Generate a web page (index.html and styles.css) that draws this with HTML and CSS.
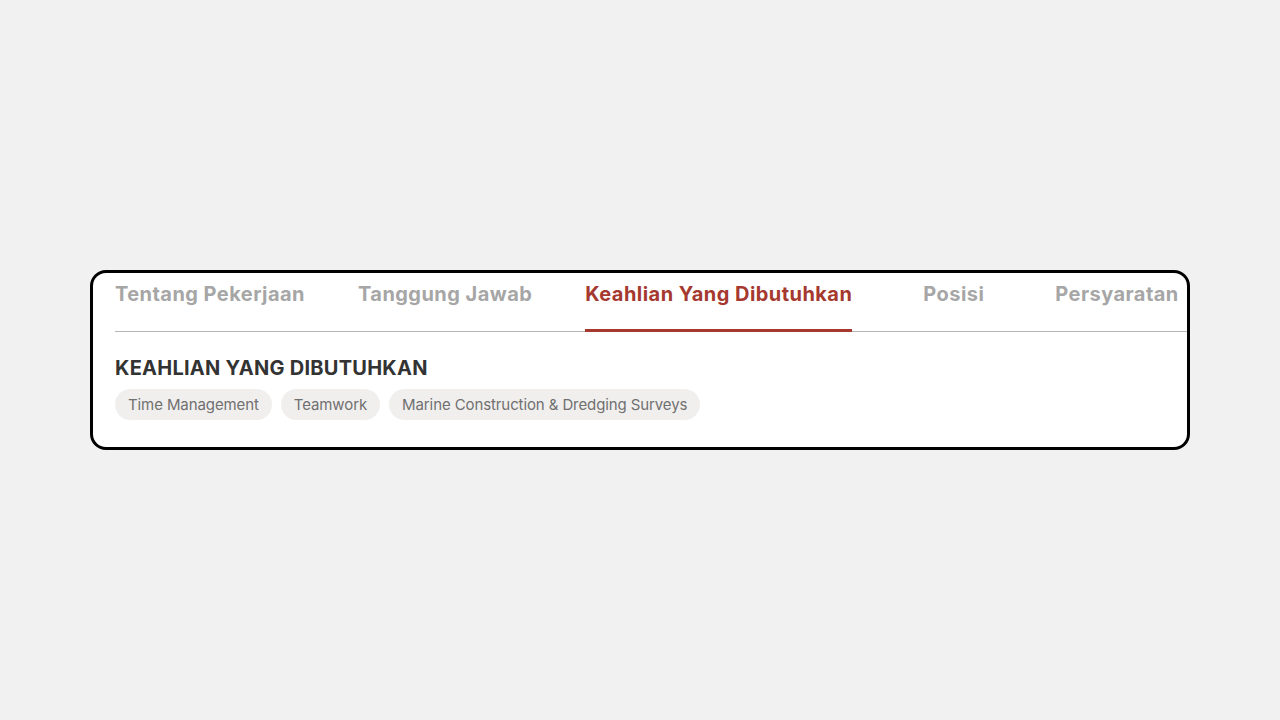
FILE: index.html
```html
<!DOCTYPE html>
<html lang="id">
<head>
<meta charset="utf-8">
<title>Keahlian Yang Dibutuhkan</title>
<link rel="stylesheet" href="styles.css">
</head>
<body>
<main class="page">
  <section class="card">
    <nav class="tabs">
      <a class="tab">Tentang Pekerjaan</a>
      <a class="tab">Tanggung Jawab</a>
      <a class="tab active">Keahlian Yang Dibutuhkan</a>
      <a class="tab">Posisi</a>
      <a class="tab">Persyaratan</a>
    </nav>
    <div class="content">
      <h2 class="title">KEAHLIAN YANG DIBUTUHKAN</h2>
      <ul class="chips">
        <li class="chip">Time Management</li>
        <li class="chip">Teamwork</li>
        <li class="chip">Marine Construction &amp; Dredging Surveys</li>
      </ul>
    </div>
  </section>
</main>
</body>
</html>
```
FILE: styles.css
```css
* { box-sizing: border-box; }
html, body { margin: 0; padding: 0; }
body {
  background: #f1f1f1;
  font-family: Inter, "Noto Sans", "Liberation Sans", sans-serif;
  width: 1280px;
  height: 720px;
}
.page {
  display: flex;
  justify-content: center;
  padding-top: 270px;
}
.card {
  width: 1100px;
  height: 180px;
  background: #fff;
  border: 3px solid #000;
  border-radius: 16px;
  padding-left: 22px;
  overflow: hidden;
}
.tabs {
  display: flex;
  gap: 53px;
  border-bottom: 1px solid #b5b5b5;
  padding-top: 9px;
  white-space: nowrap;
}
.tab {
  min-width: 97px;
  text-align: center;
  font-size: 20px;
  line-height: 24px;
  font-weight: 700;
  letter-spacing: 0.45px;
  color: #a6a6a6;
  padding-bottom: 23px;
  margin-bottom: -1px;
  border-bottom: 3px solid transparent;
}
.tab.active {
  color: #a5392f;
  border-bottom-color: #a5392f;
}
.content {
  padding-top: 24px;
  padding-right: 22px;
}
.title {
  margin: 0;
  font-size: 20px;
  line-height: 24px;
  font-weight: 700;
  letter-spacing: 0.25px;
  color: #333;
}
.chips {
  list-style: none;
  margin: 9px 0 0;
  padding: 0;
  display: flex;
  gap: 9px;
}
.chip {
  background: #f0efee;
  color: #707070;
  font-size: 15px;
  font-weight: 400;
  letter-spacing: -0.1px;
  line-height: 31px;
  height: 31px;
  padding: 0 13px;
  border-radius: 16px;
}
```
